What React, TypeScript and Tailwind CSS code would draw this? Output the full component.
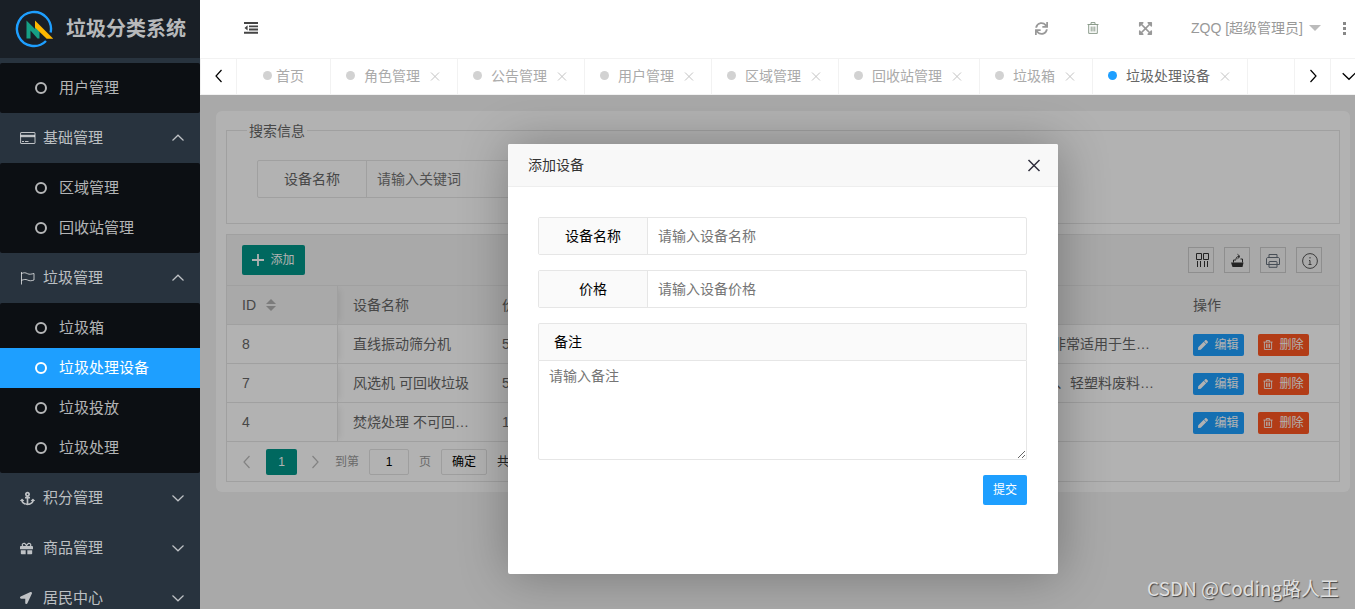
import type { ReactNode } from 'react'
import {
  FaAnchor,
  FaExpandArrowsAlt,
  FaGift,
  FaLocationArrow,
  FaPen,
  FaSync,
} from 'react-icons/fa'

// ─── Data ─────────────────────────────────────────────────────────────────────
interface MenuGroup {
  title?: string
  icon?: ReactNode
  items?: string[]
}

interface Device {
  id: number
  name: string
  price: string
  remark: string
}

const MENU: MenuGroup[] = [
  { items: ['用户管理'] },
  { title: '基础管理', icon: <CardIcon />, items: ['区域管理', '回收站管理'] },
  { title: '垃圾管理', icon: <FlagIcon />, items: ['垃圾箱', '垃圾处理设备', '垃圾投放', '垃圾处理'] },
  { title: '积分管理', icon: <FaAnchor size={15} /> },
  { title: '商品管理', icon: <FaGift size={13} /> },
  { title: '居民中心', icon: <FaLocationArrow size={12} /> },
]

const TABS = ['角色管理', '公告管理', '用户管理', '区域管理', '回收站管理', '垃圾箱', '垃圾处理设备']

const ACTIVE = '垃圾处理设备'

const DEVICES: Device[] = [
  {
    id: 8,
    name: '直线振动筛分机',
    price: '5000',
    remark: '直线振动筛分机结构简单维修方便能耗低噪音小筛分效率高产量非常适用于生活垃圾的筛分',
  },
  {
    id: 7,
    name: '风选机 可回收垃圾',
    price: '5000',
    remark: '风选机 利用风力把垃圾中轻重不同的物料分开主要分选出废纸张、轻塑料废料等可回收物',
  },
  { id: 4, name: '焚烧处理 不可回收垃圾', price: '10000', remark: '' },
]

// ─── Icons ────────────────────────────────────────────────────────────────────
function Logo() {
  return (
    <svg width="38" height="38" viewBox="0 0 38 38" aria-hidden="true">
      <path d="M31 31A17 17 0 1 1 35.6 22.5" fill="none" stroke="#1e9fff" strokeWidth="2.4" />
      <path d="M11.500 10.500L20 19V16.500L24.500 21V28.500H22.500L15.500 20.500V28.500H11.500Z" fill="#16a085" />
      <path d="M20 10.500L38.300 28.700H31.700L20 17.500Z" fill="#ffb800" />
    </svg>
  )
}

function CardIcon() {
  return (
    <svg width="16" height="14" viewBox="0 0 16 14" fill="none" stroke="currentColor" aria-hidden="true">
      <rect x="0.600" y="1.500" width="14.400" height="11" rx="0.500" />
      <path d="M0.500 5H15" strokeWidth="2.400" />
      <path d="M2 10.500H4M5 10.500H8.500" />
    </svg>
  )
}

function FlagIcon() {
  return (
    <svg width="16" height="14" viewBox="0 0 16 14" fill="none" stroke="currentColor" aria-hidden="true">
      <path d="M1.500 1V13.500" />
      <path d="M1.500 2.500C4 1.500 5.500 1.500 7.500 2.700C9.500 3.800 11.500 3 14 2.500V9C11.500 10 9.500 10 7.500 9C5.500 8 4 8.500 1.500 9.300" />
    </svg>
  )
}

function OutdentIcon() {
  return (
    <svg width="14" height="12" viewBox="0 0 14 12" fill="currentColor" aria-hidden="true">
      <path d="M0 0H14V2H0ZM5 3.400H14V5.200H5ZM5 6.600H14V8.400H5ZM0 9.800H14V11.700H0ZM3.600 3.300V8.500L0.500 5.900Z" />
    </svg>
  )
}

function TrashIcon({ size }: { size: number }) {
  return (
    <svg width={size} height={size} viewBox="0 0 12 12" fill="none" stroke="currentColor" aria-hidden="true">
      <path d="M0.500 2.500H11.500M4 2.500V0.600H8V2.500M1.700 2.500V11.400H10.300V2.500M4.200 4.500V9.500M6 4.500V9.500M7.800 4.500V9.500" />
    </svg>
  )
}

function Chevron({ d, size = 14 }: { d: string; size?: number }) {
  return (
    <svg
      width={size}
      height={size}
      viewBox="0 0 14 14"
      fill="none"
      stroke="currentColor"
      strokeWidth="1.2"
      aria-hidden="true"
    >
      <path d={d} />
    </svg>
  )
}

const UP = 'M1.500 9.500L7 4.200L12.500 9.500'
const DOWN = 'M1.500 4.500L7 9.800L12.500 4.500'
const LEFT = 'M9.500 1L4 7L9.500 13'
const RIGHT = 'M4.500 1L10 7L4.500 13'

function ColumnsIcon() {
  return (
    <svg width="16" height="14" viewBox="0 0 16 14" fill="none" stroke="currentColor" aria-hidden="true">
      <path d="M3.500 0.500H8.500V6.500H3.500ZM10.500 0.500H15.500V6.500H10.500ZM4.500 8V14M7.500 8V14M11.500 8V14M14.500 8V14" />
    </svg>
  )
}

function ExportIcon() {
  return (
    <svg width="14" height="14" viewBox="0 0 14 14" fill="none" stroke="currentColor" aria-hidden="true">
      <path d="M1 9.500H13.500L12.500 14H2.500Z" fill="currentColor" stroke="none" />
      <path d="M3.500 9.500V7H6M10.500 6H12.500V9.500M6 6.500C6 4.500 7 3.500 9 3.500M7.500 1.300L10 3.500L7.500 5.700" />
    </svg>
  )
}

function PrintIcon() {
  return (
    <svg width="16" height="16" viewBox="0 0 16 16" fill="none" stroke="#66707c" aria-hidden="true">
      <path d="M4 5.500V2.500H12V5.500M4 12.500H1.500V7C1.500 6 2 5.500 3 5.500H13C14 5.500 14.500 6 14.500 7V12.500H12" />
      <path d="M4 10C4 9.500 4.500 9.500 5 9.500H11C11.500 9.500 12 9.500 12 10V15.300H4ZM4 12.500H12" />
    </svg>
  )
}

function InfoIcon() {
  return (
    <svg width="18" height="18" viewBox="0 0 18 18" fill="none" stroke="#555" aria-hidden="true">
      <circle cx="10" cy="10" r="7.400" />
      <path d="M10 6V7.500M9 9.500H10V13.500M8.500 13.500H11.500" />
    </svg>
  )
}

// ─── Sidebar ──────────────────────────────────────────────────────────────────
function Sidebar() {
  return (
    <aside className="flex w-[200px] shrink-0 flex-col overflow-hidden bg-[#28333e] text-[15px] text-white/70">
      <div className="flex h-[58px] shrink-0 items-center gap-[13px] bg-[#191f26] pl-[15px]">
        <Logo />
        <h1 className="text-xl font-bold">垃圾分类系统</h1>
      </div>
      <nav className="pt-[5px]">
        {MENU.map((group, idx) => (
          <div key={group.title ?? idx}>
            {group.title && (
              <button className="flex h-[50px] w-full items-center pr-[15px] pl-5">
                <span className="w-[23px]">{group.icon}</span>
                <span className="flex-1 text-left">{group.title}</span>
                <Chevron d={group.items ? UP : DOWN} />
              </button>
            )}
            {group.items && (
              <ul className="rounded-xs bg-[#0c0f13] py-[5px]">
                {group.items.map((item) => (
                  <li key={item}>
                    <a
                      href="#"
                      className={
                        item === ACTIVE
                          ? 'flex h-10 items-center gap-3 bg-[#1e9fff] pl-[35px] text-white'
                          : 'flex h-10 items-center gap-3 pl-[35px]'
                      }
                    >
                      <span className="size-3 rounded-full border-2 border-current" />
                      {item}
                    </a>
                  </li>
                ))}
              </ul>
            )}
          </div>
        ))}
      </nav>
    </aside>
  )
}

// ─── Header and tabs ──────────────────────────────────────────────────────────
function Header() {
  return (
    <header className="flex h-[58px] shrink-0 items-center pb-[2px] text-[#999]">
      <button aria-label="收起菜单" className="ml-11 text-[#444]">
        <OutdentIcon />
      </button>
      <div className="ml-auto flex items-center">
        <button aria-label="刷新" className="flex w-[52px] justify-center">
          <FaSync size={13} />
        </button>
        <button aria-label="清除缓存" className="flex w-[52px] justify-center text-[#8c9c8c]">
          <TrashIcon size={12} />
        </button>
        <button aria-label="全屏" className="flex w-[52px] justify-center">
          <FaExpandArrowsAlt size={15} />
        </button>
        <button className="ml-5 flex items-center gap-[6px] text-sm">
          ZQQ [超级管理员]
          <span className="border-x-[6px] border-t-[6px] border-x-transparent border-t-[#bbb]" />
        </button>
        <button aria-label="更多" className="mr-5 ml-[22px] flex flex-col gap-[2px]">
          <span className="size-[3px] bg-[#888]" />
          <span className="size-[3px] bg-[#888]" />
          <span className="size-[3px] bg-[#888]" />
        </button>
      </div>
    </header>
  )
}

function TabBar() {
  return (
    <div className="flex h-[37px] shrink-0 border-y border-l border-[#f2f2f2] text-sm text-[#aaa]">
      <button aria-label="向左" className="flex w-9 items-center justify-center border-r border-[#f2f2f2] pb-[2px] text-black">
        <Chevron d={LEFT} />
      </button>
      <a href="#" className="flex items-center gap-1 border-r border-[#f2f2f2] px-[26px] pb-[2px]">
        <span className="size-[9px] rounded-full bg-[#d2d2d2]" />
        首页
      </a>
      {TABS.map((tab) => (
        <div key={tab} className="flex shrink-0 items-center border-r border-[#f2f2f2] pr-[17px] pb-[2px] pl-[15px]">
          <span
            className={
              tab === ACTIVE ? 'size-[9px] rounded-full bg-[#1e9fff]' : 'size-[9px] rounded-full bg-[#d2d2d2]'
            }
          />
          <a href="#" className={tab === ACTIVE ? 'mx-[9px] text-[#666]' : 'mx-[9px]'}>
            {tab}
          </a>
          <button aria-label={`关闭${tab}`} className="text-[#c2c2c2]">
            <svg width="11" height="11" viewBox="0 0 11 11" stroke="currentColor" aria-hidden="true">
              <path d="M2 2.500L10 10.500M10 2.500L2 10.500" />
            </svg>
          </button>
        </div>
      ))}
      <div className="ml-auto flex text-black">
        <button aria-label="向右" className="flex w-9 items-center justify-center border-l border-[#f2f2f2] pb-[2px]">
          <Chevron d={RIGHT} />
        </button>
        <button aria-label="标签操作" className="flex w-9 items-center justify-center border-l border-[#f2f2f2] pb-[2px]">
          <Chevron d={DOWN} size={16} />
        </button>
      </div>
    </div>
  )
}

// ─── Device list ──────────────────────────────────────────────────────────────
function SearchBox() {
  return (
    <fieldset className="h-[103px] border border-[#e6e6e6] px-[30px] text-sm">
      <legend className="-ml-[10px] h-[18px] px-[2px] leading-5 text-[#666]">搜索信息</legend>
      <div className="mt-[21px] flex h-[38px] w-[400px] rounded-xs border border-[#e6e6e6] text-[#666]">
        <label
          htmlFor="keyword"
          className="flex w-[109px] items-center justify-center border-r border-[#e6e6e6]"
        >
          设备名称
        </label>
        <input
          id="keyword"
          placeholder="请输入关键词"
          className="min-w-0 flex-1 px-[10px] outline-none placeholder:text-[#757575]"
        />
      </div>
    </fieldset>
  )
}

function ToolButton({ label, children }: { label: string; children: ReactNode }) {
  return (
    <button
      aria-label={label}
      className="flex size-[26px] items-center justify-center border border-[#ccc] text-[#333]"
    >
      {children}
    </button>
  )
}

function DeviceTable() {
  return (
    <table className="w-full table-fixed border-separate border-spacing-0 text-left text-sm text-[#666]">
      <colgroup>
        <col className="w-[111px]" />
        <col className="w-[149px]" />
        <col className="w-[158px]" />
        <col />
        <col className="w-[161px]" />
      </colgroup>
      <thead>
        <tr className="h-[39px] bg-[#f2f2f2] [&>th]:border-b [&>th]:border-[#e6e6e6] [&>th]:px-[15px] [&>th]:font-normal">
          <th className="relative border-r shadow-[6px_0_6px_-4px_rgba(0,0,0,0.08)]">
            <span className="flex items-center gap-[10px]">
              ID
              <span className="flex flex-col gap-[2px]">
                <span className="border-x-[5px] border-b-[5px] border-x-transparent border-b-[#b2b2b2]" />
                <span className="border-x-[5px] border-t-[5px] border-x-transparent border-t-[#b2b2b2]" />
              </span>
            </span>
          </th>
          <th>设备名称</th>
          <th>价格</th>
          <th>备注</th>
          <th>操作</th>
        </tr>
      </thead>
      <tbody>
        {DEVICES.map((device) => (
          <tr key={device.id} className="h-[39px] [&>td]:border-b [&>td]:border-[#e6e6e6] [&>td]:px-[15px]">
            <td className="relative border-r shadow-[6px_0_6px_-4px_rgba(0,0,0,0.08)]">{device.id}</td>
            <td className="truncate">{device.name}</td>
            <td>{device.price}</td>
            <td className="truncate">{device.remark}</td>
            <td>
              <div className="flex gap-[14px] pt-[2px] text-xs text-white">
                <button className="flex h-[22px] w-[51px] items-center justify-center gap-[6px] rounded-xs bg-[#1e9fff]">
                  <FaPen size={10} />
                  编辑
                </button>
                <button className="flex h-[22px] w-[51px] items-center justify-center gap-[6px] rounded-xs bg-[#ff5722]">
                  <TrashIcon size={10} />
                  删除
                </button>
              </div>
            </td>
          </tr>
        ))}
      </tbody>
    </table>
  )
}

function Pagination() {
  return (
    <div className="flex h-[39px] items-center pl-[13px] text-xs text-[#999]">
      <button aria-label="上一页" className="flex w-[26px] text-[#bbb]">
        <Chevron d={LEFT} />
      </button>
      <button className="h-[26px] w-[31px] rounded-xs bg-[#009688] text-white">1</button>
      <button aria-label="下一页" className="flex w-[38px] pl-[11px] text-[#bbb]">
        <Chevron d={RIGHT} />
      </button>
      <label htmlFor="page">到第</label>
      <input
        id="page"
        defaultValue="1"
        className="mx-[10px] h-[26px] w-10 rounded-xs border border-[#e2e2e2] text-center text-black outline-none"
      />
      页
      <button className="mx-[10px] h-[26px] w-[46px] rounded-xs border border-[#e2e2e2] text-black">确定</button>
      <span className="text-[#333]">共 3 条</span>
    </div>
  )
}

// ─── Dialog ───────────────────────────────────────────────────────────────────
function Field({ id, label, placeholder }: { id: string; label: string; placeholder: string }) {
  return (
    <div className="flex h-[38px] rounded-xs border border-[#e6e6e6]">
      <label
        htmlFor={id}
        className="flex w-[109px] items-center justify-center border-r border-[#e6e6e6] bg-[#fafafa]"
      >
        {label}
      </label>
      <input
        id={id}
        placeholder={placeholder}
        className="min-w-0 flex-1 px-[10px] outline-none placeholder:text-[#757575]"
      />
    </div>
  )
}

function AddDialog() {
  return (
    <div
      role="dialog"
      aria-label="添加设备"
      className="h-[430px] w-[550px] rounded-xs bg-white text-sm text-black shadow-[1px_1px_50px_rgba(0,0,0,0.3)]"
    >
      <div className="flex h-[43px] items-center justify-between rounded-t-xs border-b border-[#eee] bg-[#f8f8f8] pr-[17px] pl-5 text-[#333]">
        <h2>添加设备</h2>
        <button aria-label="关闭" className="text-[#2e2d3c]">
          <svg width="14" height="14" viewBox="0 0 14 14" stroke="currentColor" strokeWidth="1.500" aria-hidden="true">
            <path d="M1.500 2L12.500 13M12.500 2L1.500 13" />
          </svg>
        </button>
      </div>
      <form className="flex flex-col gap-[15px] py-[30px] pr-[31px] pl-[30px]" onSubmit={(e) => e.preventDefault()}>
        <Field id="name" label="设备名称" placeholder="请输入设备名称" />
        <Field id="price" label="价格" placeholder="请输入设备价格" />
        <div className="flex flex-col">
          <label
            htmlFor="remark"
            className="flex h-[37px] items-center rounded-t-xs border border-b-0 border-[#e6e6e6] bg-[#fafafa] px-[15px]"
          >
            备注
          </label>
          <textarea
            id="remark"
            placeholder="请输入备注"
            className="h-[100px] resize rounded-b-xs border border-[#e6e6e6] px-[10px] py-[5px] leading-5 outline-none placeholder:text-[#757575]"
          />
        </div>
        <button className="h-[30px] w-11 self-end rounded-xs bg-[#1e9fff] text-xs text-white">提交</button>
      </form>
    </div>
  )
}

// ─── Page ─────────────────────────────────────────────────────────────────────
export default function App() {
  return (
    <div className="relative flex h-screen overflow-hidden bg-white font-['Liberation_Sans','Noto_Sans_CJK_SC',sans-serif]">
      <Sidebar />
      <div className="-mr-[11px] -mb-[14px] flex min-w-0 flex-1 flex-col">
        <Header />
        <TabBar />
        <main className="relative flex-1 overflow-hidden bg-[#f2f2f2] p-4">
          <div className="rounded-md bg-white p-[10px]">
            <SearchBox />
            <section className="mt-[10px] border border-[#e6e6e6]">
              <div className="flex h-[51px] items-center justify-between border-b border-[#e6e6e6] bg-[#f2f2f2] pr-[17px] pl-[15px]">
                <button className="flex h-[30px] w-[63px] items-center justify-center gap-[6px] rounded-xs bg-[#009688] text-xs text-white">
                  <svg width="12" height="12" viewBox="0 0 12 12" stroke="currentColor" strokeWidth="1.800" aria-hidden="true">
                    <path d="M6 0V12M0 6H12" />
                  </svg>
                  添加
                </button>
                <div className="flex gap-[10px]">
                  <ToolButton label="筛选列"><ColumnsIcon /></ToolButton>
                  <ToolButton label="导出"><ExportIcon /></ToolButton>
                  <ToolButton label="打印"><PrintIcon /></ToolButton>
                  <ToolButton label="提示"><InfoIcon /></ToolButton>
                </div>
              </div>
              <DeviceTable />
              <Pagination />
            </section>
          </div>
          {/* shade and dialog over the list */}
          <div className="absolute inset-0 flex items-center justify-center bg-black/30">
            <AddDialog />
          </div>
        </main>
      </div>
      <div className="pointer-events-none absolute right-[67px] bottom-5 text-black/[0.02]">
        <p className="text-xl">激活 Windows</p>
        <p className="text-sm">转到“设置”以激活 Windows。</p>
      </div>
      <p className="pointer-events-none absolute right-4 bottom-[7px] font-['Noto_Sans_CJK_SC',sans-serif] text-[19px] text-[#e0e0e0] [text-shadow:1px_1px_1px_#444]">
        CSDN @Coding路人王
      </p>
    </div>
  )
}
